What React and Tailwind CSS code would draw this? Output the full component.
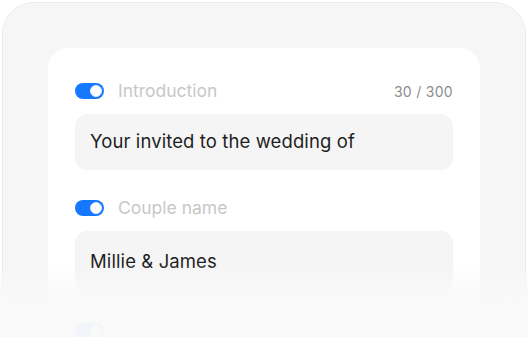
function Toggle() {
  return (
    <div className="w-[29px] h-[16px] rounded-full bg-[#1677ff] flex items-center justify-end pr-[2px] shrink-0">
      <div className="w-[12px] h-[12px] rounded-full bg-white border border-[#e6efff]" />
    </div>
  );
}

function Field({ label, value, counter, tall }) {
  return (
    <div className="flex flex-col gap-[11px]">
      <div className="flex items-center h-[24px]">
        <Toggle />
        <span className="ml-[14px] text-[17.5px] text-[#c8c8c8]">{label}</span>
        {counter && (
          <span className="ml-auto text-[14px] text-[#8c8c8c] tracking-[0.3px]">{counter}</span>
        )}
      </div>
      <div
        className={
          tall
            ? "h-[62px] rounded-[12px] bg-[#f5f5f5] flex items-center px-[15px]"
            : "h-[56px] rounded-[12px] bg-[#f5f5f5] flex items-center px-[15px]"
        }
      >
        <span className="text-[18.5px] text-[#1f1f1f] tracking-[0.1px]">{value}</span>
      </div>
    </div>
  );
}

export default function App() {
  return (
    <div
      className="w-[528px] h-[337px] bg-white relative overflow-hidden pt-[2px] px-[2px]"
      style={{ fontFamily: "Inter, 'Noto Sans', sans-serif" }}
    >
      <div className="h-[400px] rounded-t-[32px] border border-[#ebebeb] bg-[#f6f6f6] px-[45px] pt-[45px]">
        <div className="bg-white rounded-t-[20px] h-full px-[27px] pt-[31px] flex flex-col gap-[26px]">
          <Field label="Introduction" value="Your invited to the wedding of" counter="30 / 300" />
          <Field label="Couple name" value="Millie & James" tall />
          {/* next row, mostly hidden under the fade */}
          <div className="flex items-center h-[24px]">
            <Toggle />
          </div>
        </div>
      </div>
      <div className="absolute left-0 right-0 bottom-0 h-[72px] bg-gradient-to-b from-[#f9f9f9]/0 via-[#f9f9f9]/95 via-40% to-[#f9f9f9]/[0.97]" />
    </div>
  );
}
